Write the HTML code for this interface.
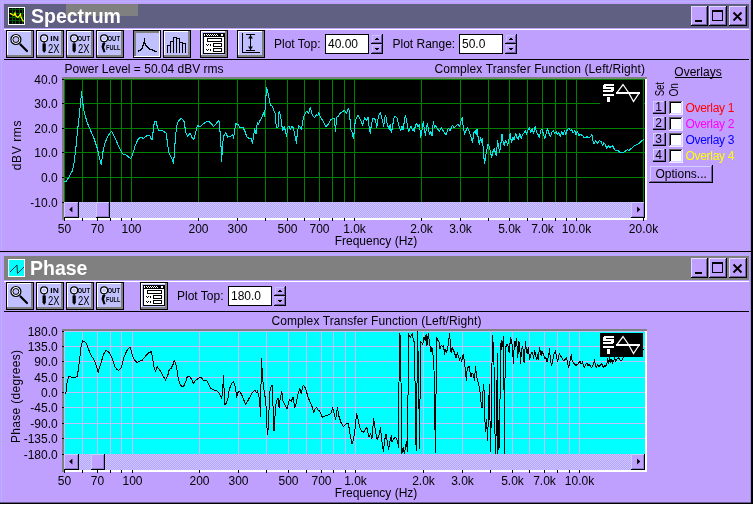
<!DOCTYPE html>
<html><head><meta charset="utf-8"><title>Spectrum / Phase</title>
<style>
html,body{margin:0;padding:0;background:#c0a0ff;overflow:hidden}
svg{display:block;font-family:"Liberation Sans",sans-serif;will-change:transform;transform:translateZ(0)}
</style></head><body>
<svg width="753" height="506" viewBox="0 0 753 506" shape-rendering="crispEdges">
<defs><pattern id="dith" width="2" height="2" patternUnits="userSpaceOnUse"><rect width="2" height="2" fill="#c0a0ff"/><rect width="1" height="1" fill="#c4ccff"/><rect x="1" y="1" width="1" height="1" fill="#c4ccff"/></pattern></defs>
<rect x="0" y="0" width="753" height="252" fill="#c0a0ff"/>
<rect x="1" y="1" width="749" height="1" fill="#b4b4ff"/>
<rect x="1" y="1" width="1" height="249" fill="#b4b4ff"/>
<rect x="750" y="1" width="1" height="250" fill="#a48ce4"/>
<rect x="0" y="251" width="753" height="1" fill="#000"/>
<rect x="751" y="0" width="2" height="252" fill="#000"/>
<rect x="4" y="4" width="745" height="24" fill="#606082"/>
<rect x="66" y="4" width="72" height="12" fill="#808080"/>
<rect x="4" y="29" width="745" height="1" fill="#fff"/>
<rect x="4" y="59" width="745" height="1" fill="#000"/>
<rect x="8" y="7" width="17" height="18" fill="#fff"/>
<rect x="9" y="8" width="15" height="16" fill="#000"/>
<rect x="12" y="8" width="1" height="16" fill="#005800"/>
<rect x="15" y="8" width="1" height="16" fill="#005800"/>
<rect x="19" y="8" width="1" height="16" fill="#005800"/>
<rect x="22" y="8" width="1" height="16" fill="#005800"/>
<rect x="9" y="9" width="15" height="1" fill="#005800"/>
<rect x="9" y="13" width="15" height="1" fill="#005800"/>
<rect x="9" y="17" width="15" height="1" fill="#005800"/>
<rect x="9" y="20" width="15" height="1" fill="#005800"/>
<path d="M10 13.4 L12 14.5 L14 15.5 L15 13 L16 16 L18 17.4 L19.5 15.5 L20.5 14 L21 17 L22 19 L23.5 21.5" stroke="#ffff00" stroke-width="1.2" fill="none" shape-rendering="auto"/>
<text x="31" y="22.8" font-size="19.5" text-anchor="start" fill="#fff" font-weight="bold">Spectrum</text>
<rect x="691" y="6" width="17" height="20" fill="#000"/>
<rect x="691" y="6" width="16" height="19" fill="#e0d8ff"/>
<rect x="692" y="7" width="15" height="18" fill="#7060a0"/>
<rect x="692" y="7" width="14" height="17" fill="#c0a0ff"/>
<rect x="709" y="6" width="18" height="20" fill="#000"/>
<rect x="709" y="6" width="17" height="19" fill="#e0d8ff"/>
<rect x="710" y="7" width="16" height="18" fill="#7060a0"/>
<rect x="710" y="7" width="15" height="17" fill="#c0a0ff"/>
<rect x="729" y="6" width="18" height="20" fill="#000"/>
<rect x="729" y="6" width="17" height="19" fill="#e0d8ff"/>
<rect x="730" y="7" width="16" height="18" fill="#7060a0"/>
<rect x="730" y="7" width="15" height="17" fill="#c0a0ff"/>
<rect x="695" y="20" width="7" height="2" fill="#000"/>
<rect x="712" y="10" width="11" height="11" fill="#000"/>
<rect x="713" y="12" width="9" height="8" fill="#c0a0ff"/>
<path d="M733.5 12.5 L741.5 20.5 M741.5 12.5 L733.5 20.5" stroke="#000" stroke-width="1.8" fill="none" shape-rendering="auto"/>
<rect x="6" y="30" width="28" height="28" fill="#000"/>
<rect x="7" y="31" width="26" height="26" fill="#808080"/>
<rect x="7" y="31" width="24" height="24" fill="#fff"/>
<rect x="8" y="32" width="23" height="23" fill="#c0c0ff"/>
<circle cx="15.9" cy="39.5" r="5" fill="#fff" stroke="#000" stroke-width="1.2" shape-rendering="auto"/>
<circle cx="15.9" cy="39.5" r="3" fill="#c0c0ff" stroke="#000" stroke-width="1" shape-rendering="auto"/>
<path d="M20.5 44.5 L27 51" stroke="#000" stroke-width="2.2" fill="none" shape-rendering="auto" stroke-linecap="round"/>
<rect x="36" y="30" width="28" height="28" fill="#000"/>
<rect x="37" y="31" width="26" height="26" fill="#808080"/>
<rect x="37" y="31" width="24" height="24" fill="#fff"/>
<rect x="38" y="32" width="23" height="23" fill="#c0c0ff"/>
<circle cx="44.1" cy="38.3" r="3.5" fill="#fff" stroke="#000" stroke-width="1.2" shape-rendering="auto"/>
<circle cx="44.1" cy="38.3" r="2.0" fill="#c0c0ff" shape-rendering="auto"/>
<rect x="43.6" y="41.5" width="1" height="2.5" fill="#000" shape-rendering="auto"/>
<path d="M42.5 43.5 L45.8 43.5 L45.8 50.5 L44.2 53 L42.5 50.5 Z" stroke="none" stroke-width="1" fill="#000" shape-rendering="auto"/>
<text x="50.3" y="41" font-size="7" text-anchor="start" fill="#000" font-weight="bold" textLength="8.5" lengthAdjust="spacingAndGlyphs">IN</text>
<text x="48" y="53" font-size="12" text-anchor="start" fill="#000" font-weight="normal" textLength="11.5" lengthAdjust="spacingAndGlyphs">2X</text>
<rect x="66" y="30" width="28" height="28" fill="#000"/>
<rect x="67" y="31" width="26" height="26" fill="#808080"/>
<rect x="67" y="31" width="24" height="24" fill="#fff"/>
<rect x="68" y="32" width="23" height="23" fill="#c0c0ff"/>
<circle cx="74.1" cy="38.3" r="3.5" fill="#fff" stroke="#000" stroke-width="1.2" shape-rendering="auto"/>
<circle cx="74.1" cy="38.3" r="2.0" fill="#c0c0ff" shape-rendering="auto"/>
<rect x="73.6" y="41.5" width="1" height="2.5" fill="#000" shape-rendering="auto"/>
<path d="M72.5 43.5 L75.8 43.5 L75.8 50.5 L74.2 53 L72.5 50.5 Z" stroke="none" stroke-width="1" fill="#000" shape-rendering="auto"/>
<text x="77.5" y="41" font-size="7" text-anchor="start" fill="#000" font-weight="bold" textLength="12.5" lengthAdjust="spacingAndGlyphs">OUT</text>
<text x="78" y="53" font-size="12" text-anchor="start" fill="#000" font-weight="normal" textLength="11.5" lengthAdjust="spacingAndGlyphs">2X</text>
<rect x="96" y="30" width="28" height="28" fill="#000"/>
<rect x="97" y="31" width="26" height="26" fill="#808080"/>
<rect x="97" y="31" width="24" height="24" fill="#fff"/>
<rect x="98" y="32" width="23" height="23" fill="#c0c0ff"/>
<circle cx="104.1" cy="38.3" r="3.5" fill="#fff" stroke="#000" stroke-width="1.2" shape-rendering="auto"/>
<circle cx="104.1" cy="38.3" r="2.0" fill="#c0c0ff" shape-rendering="auto"/>
<rect x="103.6" y="41.5" width="1" height="2.5" fill="#000" shape-rendering="auto"/>
<path d="M102.5 43 L105.5 43 L104 47 L105.5 52 L103.5 52.5 L101.5 47 Z" stroke="none" stroke-width="1" fill="#000" shape-rendering="auto"/>
<text x="107.5" y="41" font-size="7" text-anchor="start" fill="#000" font-weight="bold" textLength="12.5" lengthAdjust="spacingAndGlyphs">OUT</text>
<text x="106" y="49.5" font-size="6.5" text-anchor="start" fill="#000" font-weight="bold" textLength="14.3" lengthAdjust="spacingAndGlyphs">FULL</text>
<rect x="133" y="30" width="28" height="28" fill="#000"/>
<rect x="134" y="31" width="26" height="26" fill="#fff"/>
<rect x="134" y="31" width="25" height="25" fill="#808080"/>
<rect x="136" y="33" width="23" height="23" fill="#c0c0ff"/>
<path d="M138.5 52 V50.5 H140.5 V49.5 H141.5 V48 H142.5 V45 H143.5 V42 H144.5 V38 V43 H145.5 V45 H146.5 V46 H147.5 V47 H148.5 V48 H149.5 V49 H152.5 V50 H154.5 V51 H157" stroke="#000" stroke-width="1" fill="none"/>
<rect x="163" y="30" width="28" height="28" fill="#000"/>
<rect x="164" y="31" width="26" height="26" fill="#808080"/>
<rect x="164" y="31" width="24" height="24" fill="#fff"/>
<rect x="165" y="32" width="23" height="23" fill="#c0c0ff"/>
<path d="M167.5 53 V45.5 H170.5 V53" stroke="#000" stroke-width="1" fill="none"/>
<path d="M170.5 53 V41.5 H173.5 V53" stroke="#000" stroke-width="1" fill="none"/>
<path d="M173.5 53 V37.5 H176.5 V53" stroke="#000" stroke-width="1" fill="none"/>
<path d="M176.5 53 V38.5 H179.5 V53" stroke="#000" stroke-width="1" fill="none"/>
<path d="M179.5 53 V42.5 H182.5 V53" stroke="#000" stroke-width="1" fill="none"/>
<path d="M182.5 53 V43.5 H185.5 V53" stroke="#000" stroke-width="1" fill="none"/>
<rect x="200" y="30" width="28" height="28" fill="#000"/>
<rect x="201" y="31" width="26" height="26" fill="#808080"/>
<rect x="201" y="31" width="24" height="24" fill="#fff"/>
<rect x="202" y="32" width="23" height="23" fill="#c0c0ff"/>
<rect x="203" y="33" width="22" height="21" fill="#000"/>
<rect x="204" y="37" width="20" height="16" fill="#fff"/>
<rect x="206" y="34" width="1" height="1" fill="#fff"/>
<rect x="207" y="35" width="1" height="1" fill="#fff"/>
<rect x="208" y="34" width="1" height="1" fill="#fff"/>
<rect x="209" y="35" width="1" height="1" fill="#fff"/>
<rect x="210" y="34" width="1" height="1" fill="#fff"/>
<rect x="211" y="35" width="1" height="1" fill="#fff"/>
<rect x="212" y="34" width="1" height="1" fill="#fff"/>
<rect x="213" y="35" width="1" height="1" fill="#fff"/>
<rect x="214" y="34" width="1" height="1" fill="#fff"/>
<rect x="215" y="35" width="1" height="1" fill="#fff"/>
<rect x="216" y="34" width="1" height="1" fill="#fff"/>
<rect x="217" y="35" width="1" height="1" fill="#fff"/>
<rect x="204" y="34" width="1" height="2" fill="#fff"/>
<rect x="221" y="34" width="2" height="2" fill="#fff"/>
<rect x="207" y="38" width="15" height="4" fill="#000"/>
<rect x="208" y="39" width="13" height="2" fill="#fff"/>
<rect x="213" y="43" width="9" height="4" fill="#000"/>
<rect x="214" y="44" width="7" height="2" fill="#fff"/>
<rect x="213" y="48" width="9" height="4" fill="#000"/>
<rect x="214" y="49" width="7" height="2" fill="#fff"/>
<rect x="206" y="44" width="1" height="1" fill="#000"/>
<rect x="207" y="45" width="1" height="1" fill="#000"/>
<rect x="208" y="44" width="1" height="1" fill="#000"/>
<rect x="210" y="44" width="1" height="2" fill="#000"/>
<rect x="206" y="49" width="1" height="1" fill="#000"/>
<rect x="207" y="50" width="1" height="1" fill="#000"/>
<rect x="208" y="49" width="1" height="1" fill="#000"/>
<rect x="210" y="49" width="1" height="2" fill="#000"/>
<rect x="237" y="30" width="28" height="28" fill="#000"/>
<rect x="238" y="31" width="26" height="26" fill="#808080"/>
<rect x="238" y="31" width="24" height="24" fill="#fff"/>
<rect x="239" y="32" width="23" height="23" fill="#c0c0ff"/>
<rect x="242" y="33" width="1" height="20" fill="#000"/>
<rect x="242" y="52" width="18" height="1" fill="#000"/>
<rect x="246" y="34" width="9" height="1.3" fill="#000"/>
<rect x="246" y="50" width="9" height="1.3" fill="#000"/>
<rect x="250" y="35" width="1" height="15" fill="#000"/>
<path d="M250.5 35 L253 38.5 H248 Z" stroke="none" stroke-width="1" fill="#000" shape-rendering="auto"/>
<path d="M250.5 50 L253 46.5 H248 Z" stroke="none" stroke-width="1" fill="#000" shape-rendering="auto"/>
<text x="274" y="48" font-size="12" text-anchor="start" fill="#000" font-weight="normal">Plot Top:</text>
<rect x="325" y="34" width="44" height="20" fill="#000"/>
<rect x="326" y="35" width="42" height="18" fill="#fff"/>
<text x="328" y="48" font-size="12" text-anchor="start" fill="#000" font-weight="normal">40.00</text>
<rect x="371" y="34" width="12" height="20" fill="#c0a0ff"/>
<rect x="382" y="34" width="1" height="20" fill="#000"/>
<rect x="371" y="43" width="12" height="1" fill="#000"/>
<rect x="371" y="53" width="12" height="1" fill="#000"/>
<rect x="372" y="42" width="10" height="1" fill="#7060a0"/>
<rect x="381" y="35" width="1" height="8" fill="#7060a0"/>
<rect x="372" y="35" width="9" height="1" fill="#c4c4ff"/>
<rect x="372" y="35" width="1" height="7" fill="#c4c4ff"/>
<rect x="372" y="52" width="10" height="1" fill="#7060a0"/>
<rect x="381" y="45" width="1" height="8" fill="#7060a0"/>
<rect x="372" y="45" width="9" height="1" fill="#c4c4ff"/>
<rect x="372" y="45" width="1" height="7" fill="#c4c4ff"/>
<rect x="376" y="38" width="2" height="1" fill="#000"/>
<rect x="375" y="39" width="4" height="1" fill="#000"/>
<rect x="375" y="48" width="4" height="1" fill="#000"/>
<rect x="376" y="49" width="2" height="1" fill="#000"/>
<text x="392.5" y="48" font-size="12" text-anchor="start" fill="#000" font-weight="normal">Plot Range:</text>
<rect x="459" y="34" width="44" height="20" fill="#000"/>
<rect x="460" y="35" width="42" height="18" fill="#fff"/>
<text x="462" y="48" font-size="12" text-anchor="start" fill="#000" font-weight="normal">50.0</text>
<rect x="505" y="34" width="12" height="20" fill="#c0a0ff"/>
<rect x="516" y="34" width="1" height="20" fill="#000"/>
<rect x="505" y="43" width="12" height="1" fill="#000"/>
<rect x="505" y="53" width="12" height="1" fill="#000"/>
<rect x="506" y="42" width="10" height="1" fill="#7060a0"/>
<rect x="515" y="35" width="1" height="8" fill="#7060a0"/>
<rect x="506" y="35" width="9" height="1" fill="#c4c4ff"/>
<rect x="506" y="35" width="1" height="7" fill="#c4c4ff"/>
<rect x="506" y="52" width="10" height="1" fill="#7060a0"/>
<rect x="515" y="45" width="1" height="8" fill="#7060a0"/>
<rect x="506" y="45" width="9" height="1" fill="#c4c4ff"/>
<rect x="506" y="45" width="1" height="7" fill="#c4c4ff"/>
<rect x="510" y="38" width="2" height="1" fill="#000"/>
<rect x="509" y="39" width="4" height="1" fill="#000"/>
<rect x="509" y="48" width="4" height="1" fill="#000"/>
<rect x="510" y="49" width="2" height="1" fill="#000"/>
<rect x="62" y="77" width="585" height="143" fill="#808080"/>
<rect x="64" y="79" width="583" height="141" fill="#fff"/>
<rect x="64" y="79" width="581" height="123" fill="#000"/>
<rect x="64" y="79" width="581" height="1" fill="#008000"/>
<rect x="62" y="79" width="2" height="1" fill="#000"/>
<rect x="64" y="103" width="581" height="1" fill="#008000"/>
<rect x="62" y="103" width="2" height="1" fill="#000"/>
<rect x="64" y="128" width="581" height="1" fill="#008000"/>
<rect x="62" y="128" width="2" height="1" fill="#000"/>
<rect x="64" y="152" width="581" height="1" fill="#008000"/>
<rect x="62" y="152" width="2" height="1" fill="#000"/>
<rect x="64" y="177" width="581" height="1" fill="#008000"/>
<rect x="62" y="177" width="2" height="1" fill="#000"/>
<rect x="62" y="202" width="2" height="1" fill="#000"/>
<rect x="64" y="79" width="1" height="123" fill="#008000"/>
<rect x="82" y="79" width="1" height="123" fill="#008000"/>
<rect x="97" y="79" width="1" height="123" fill="#008000"/>
<rect x="110" y="79" width="1" height="123" fill="#008000"/>
<rect x="121" y="79" width="1" height="123" fill="#008000"/>
<rect x="131" y="79" width="1" height="123" fill="#008000"/>
<rect x="198" y="79" width="1" height="123" fill="#008000"/>
<rect x="237" y="79" width="1" height="123" fill="#008000"/>
<rect x="265" y="79" width="1" height="123" fill="#008000"/>
<rect x="287" y="79" width="1" height="123" fill="#008000"/>
<rect x="304" y="79" width="1" height="123" fill="#008000"/>
<rect x="319" y="79" width="1" height="123" fill="#008000"/>
<rect x="332" y="79" width="1" height="123" fill="#008000"/>
<rect x="344" y="79" width="1" height="123" fill="#008000"/>
<rect x="354" y="79" width="1" height="123" fill="#008000"/>
<rect x="421" y="79" width="1" height="123" fill="#008000"/>
<rect x="460" y="79" width="1" height="123" fill="#008000"/>
<rect x="488" y="79" width="1" height="123" fill="#008000"/>
<rect x="509" y="79" width="1" height="123" fill="#008000"/>
<rect x="527" y="79" width="1" height="123" fill="#008000"/>
<rect x="542" y="79" width="1" height="123" fill="#008000"/>
<rect x="555" y="79" width="1" height="123" fill="#008000"/>
<rect x="566" y="79" width="1" height="123" fill="#008000"/>
<rect x="576" y="79" width="1" height="123" fill="#008000"/>
<rect x="643" y="79" width="1" height="123" fill="#008000"/>
<path d="M63.9 181.1 L66.5 181.1 L69.8 175.7 L72.6 170.2 L74.1 162.6 L75.7 149.6 L77.4 132.2 L79.1 117.0 L80.7 101.7 L81.5 92.0 L82.6 101.7 L84.3 112.6 L87.2 122.4 L90.4 130.0 L94.1 138.7 L97.0 147.4 L99.1 156.1 L101.3 164.8 L103.0 151.7 L105.0 143.0 L107.8 136.1 L111.5 131.3 L115.4 138.7 L119.1 147.4 L122.4 153.9 L126.3 155.0 L130.7 158.7 L132.8 153.9 L135.0 146.3 L137.6 140.2 L140.0 137.4 L143.7 138.3 L147.0 135.4 L150.2 136.1 L150.0 137.2 L152.1 139.8 L153.2 130.9 L154.4 121.7 L156.4 121.7 L157.5 128.3 L158.9 130.6 L162.5 130.9 L166.0 132.7 L167.3 141.6 L168.7 152.3 L171.0 156.7 L172.6 160.3 L173.5 163.8 L174.4 152.3 L175.4 138.0 L176.7 125.6 L178.5 121.1 L181.5 118.1 L184.2 121.7 L185.6 131.8 L187.4 136.3 L190.2 133.2 L191.8 137.2 L193.8 139.3 L195.4 133.6 L197.3 125.6 L200.2 126.5 L203.4 123.8 L207.3 121.1 L209.6 122.0 L213.7 126.5 L218.9 120.6 L219.8 128.3 L220.8 141.6 L221.7 161.2 L222.6 143.4 L223.8 135.9 L225.6 132.7 L227.8 137.2 L231.0 135.9 L232.7 134.5 L233.6 138.0 L234.9 128.3 L235.9 123.8 L238.1 124.7 L239.9 127.7 L243.2 127.7 L245.0 131.6 L246.8 136.9 L248.9 138.4 L251.2 138.7 L252.5 143.2 L253.5 136.9 L254.6 128.9 L256.0 134.3 L257.3 122.7 L258.3 124.5 L259.9 120.6 L261.7 118.3 L263.5 112.9 L264.4 116.5 L265.3 106.7 L266.2 92.5 L266.7 87.5 L267.9 92.5 L269.4 99.6 L270.6 105.8 L272.0 105.8 L273.8 110.2 L275.2 113.8 L276.3 127.2 L278.1 127.2 L279.1 111.1 L280.6 115.6 L282.0 126.3 L282.7 130.2 L284.1 126.6 L285.4 130.7 L286.6 136.0 L287.7 127.7 L288.9 125.9 L290.4 129.8 L292.0 125.9 L293.4 128.0 L294.8 135.2 L296.4 143.2 L297.5 131.6 L298.7 125.4 L300.1 127.2 L301.4 129.8 L302.6 121.8 L304.1 115.6 L305.8 112.0 L307.6 111.7 L308.5 113.8 L310.3 107.6 L311.5 112.0 L312.6 115.6 L314.7 117.4 L316.5 114.7 L317.8 115.6 L318.8 112.6 L320.4 117.4 L323.3 121.3 L325.9 126.6 L328.1 124.5 L330.7 120.0 L332.4 118.5 L334.4 119.0 L335.5 131.7 L336.6 117.4 L338.2 116.3 L340.3 113.2 L342.7 111.6 L344.6 110.3 L346.6 113.2 L348.5 108.4 L349.3 111.1 L350.1 120.6 L351.0 130.1 L352.2 132.5 L353.4 138.5 L354.5 129.3 L355.3 120.6 L357.7 115.1 L360.1 119.0 L361.6 122.2 L362.4 125.3 L363.5 122.2 L364.8 117.4 L366.7 120.6 L368.0 117.4 L369.2 127.7 L370.3 133.3 L371.5 123.8 L373.0 117.9 L374.8 119.0 L375.9 122.2 L376.8 127.4 L377.9 119.8 L379.4 113.5 L380.3 112.7 L381.4 116.6 L382.7 122.2 L383.8 126.1 L384.7 118.2 L385.7 115.1 L386.6 121.4 L388.1 126.9 L389.3 129.3 L390.1 124.2 L391.2 132.2 L392.5 127.7 L393.6 119.0 L395.2 116.3 L396.8 117.4 L398.4 123.8 L399.6 128.5 L400.7 130.6 L402.0 126.5 L403.1 130.1 L404.1 123.0 L405.3 115.4 L406.4 119.0 L407.5 126.1 L408.6 131.7 L409.9 128.5 L411.0 126.5 L412.3 130.1 L413.4 128.5 L414.3 131.7 L415.4 125.3 L416.7 123.8 L418.0 126.5 L419.1 124.6 L420.2 130.9 L420.8 137.7 L421.9 130.6 L423.2 121.9 L424.4 129.0 L425.5 135.3 L426.6 126.6 L427.4 123.5 L428.7 130.6 L429.8 134.6 L430.8 131.4 L432.0 136.1 L433.3 121.9 L434.6 127.4 L435.8 125.9 L437.7 129.0 L439.3 131.4 L441.4 127.9 L443.7 131.4 L446.1 134.9 L448.2 128.2 L450.1 130.6 L452.4 125.1 L454.0 127.9 L456.1 125.9 L458.0 124.3 L459.6 126.6 L460.8 121.9 L462.2 117.5 L463.2 126.6 L464.6 134.6 L465.9 130.6 L467.5 127.4 L469.1 131.4 L470.9 136.5 L472.5 142.5 L473.8 133.0 L475.1 130.6 L476.2 134.6 L477.0 129.5 L478.2 137.7 L479.3 144.1 L480.6 137.4 L481.4 142.5 L482.2 138.5 L483.3 148.8 L484.1 159.9 L484.6 163.8 L485.7 155.1 L486.8 150.4 L488.0 144.1 L489.3 146.4 L490.4 152.0 L491.7 157.5 L492.8 152.0 L494.1 148.8 L495.2 152.0 L496.3 155.9 L497.5 140.9 L498.6 146.4 L499.6 152.8 L500.7 144.8 L502.0 134.6 L503.1 141.7 L504.2 145.6 L505.4 140.9 L506.7 141.7 L507.8 145.3 L508.9 139.3 L510.2 133.8 L511.5 142.8 L512.8 137.2 L514.1 140.0 L515.6 133.1 L516.9 137.2 L518.4 139.0 L519.7 133.5 L521.2 138.1 L522.6 134.4 L523.9 133.1 L525.4 130.7 L526.7 134.4 L528.2 129.4 L529.5 127.9 L530.8 132.5 L532.3 128.8 L533.6 133.5 L535.1 126.6 L536.4 131.6 L537.9 134.4 L539.2 137.2 L540.7 130.7 L542.0 128.8 L543.5 134.4 L544.8 139.0 L546.3 132.5 L547.7 128.8 L549.0 133.5 L550.5 136.3 L551.8 132.5 L553.3 130.7 L554.6 133.5 L556.1 131.6 L557.4 134.4 L558.7 132.5 L560.2 136.3 L561.7 131.6 L563.0 135.3 L564.5 130.7 L565.8 134.4 L567.3 129.4 L569.1 128.3 L570.4 130.7 L571.9 129.7 L573.2 133.1 L574.7 130.7 L576.0 134.4 L577.3 131.6 L578.8 135.3 L580.6 134.4 L582.5 135.7 L584.4 137.7 L587.2 136.8 L589.0 138.1 L590.9 136.3 L591.8 134.0 L592.7 140.0 L594.0 143.7 L595.5 140.9 L597.4 143.7 L599.2 140.5 L601.1 141.8 L602.6 145.5 L603.9 142.8 L605.4 144.6 L606.7 148.3 L608.2 145.5 L609.8 147.4 L611.3 146.5 L612.6 145.5 L614.1 148.7 L616.0 151.1 L617.8 150.6 L619.7 152.1 L623.8 152.1 L625.3 151.1 L627.5 149.8 L629.0 150.6 L631.8 148.0 L634.6 145.5 L637.3 144.6 L640.1 142.4 L642.9 140.0 L644.2 139.2" stroke="#00e8e8" stroke-width="1.05" fill="none" shape-rendering="crispEdges" stroke-linejoin="round"/>
<rect x="600" y="81" width="43" height="24" fill="#000"/>
<rect x="604" y="84" width="10" height="2" fill="#fff"/>
<rect x="603" y="85" width="3" height="3" fill="#fff"/>
<rect x="603" y="87" width="11" height="2" fill="#fff"/>
<rect x="611" y="88" width="3" height="3" fill="#fff"/>
<rect x="603" y="90" width="10" height="2" fill="#fff"/>
<rect x="603" y="94" width="11" height="2" fill="#fff"/>
<rect x="607" y="97" width="3" height="5" fill="#fff"/>
<rect x="616" y="92" width="24" height="2" fill="#fff"/>
<path d="M617 92.5 L623 84.5 L628.5 92.5 L633.5 101.5 L639.5 92.5" stroke="#fff" stroke-width="1.25" fill="none" shape-rendering="auto" stroke-linejoin="miter"/>
<rect x="64" y="202" width="581" height="16" fill="url(#dith)"/>
<rect x="64" y="202" width="15" height="16" fill="#000"/>
<rect x="64" y="202" width="14" height="15" fill="#c8ccff"/>
<rect x="65" y="203" width="13" height="14" fill="#9080d0"/>
<rect x="65" y="203" width="12" height="13" fill="#c0a0ff"/>
<path d="M69.2 209.6 L72.4 206.6 V212.6 Z" stroke="none" stroke-width="1" fill="#000" shape-rendering="auto"/>
<rect x="631" y="202" width="14" height="16" fill="#000"/>
<rect x="631" y="202" width="13" height="15" fill="#c8ccff"/>
<rect x="632" y="203" width="12" height="14" fill="#9080d0"/>
<rect x="632" y="203" width="11" height="13" fill="#c0a0ff"/>
<path d="M640.3 209.6 L637.1 206.6 V212.6 Z" stroke="none" stroke-width="1" fill="#000" shape-rendering="auto"/>
<rect x="96" y="202" width="14" height="16" fill="#000"/>
<rect x="96" y="202" width="13" height="15" fill="#c8ccff"/>
<rect x="97" y="203" width="12" height="14" fill="#9080d0"/>
<rect x="97" y="203" width="11" height="13" fill="#c0a0ff"/>
<rect x="64" y="218" width="1" height="3" fill="#000"/>
<text x="64.5" y="233" font-size="12" text-anchor="middle" fill="#000" font-weight="normal">50</text>
<rect x="82" y="218" width="1" height="3" fill="#000"/>
<rect x="97" y="218" width="1" height="3" fill="#000"/>
<text x="97.5" y="233" font-size="12" text-anchor="middle" fill="#000" font-weight="normal">70</text>
<rect x="110" y="218" width="1" height="3" fill="#000"/>
<rect x="121" y="218" width="1" height="3" fill="#000"/>
<rect x="131" y="218" width="1" height="3" fill="#000"/>
<text x="131.5" y="233" font-size="12" text-anchor="middle" fill="#000" font-weight="normal">100</text>
<rect x="198" y="218" width="1" height="3" fill="#000"/>
<text x="198.5" y="233" font-size="12" text-anchor="middle" fill="#000" font-weight="normal">200</text>
<rect x="237" y="218" width="1" height="3" fill="#000"/>
<text x="237.5" y="233" font-size="12" text-anchor="middle" fill="#000" font-weight="normal">300</text>
<rect x="265" y="218" width="1" height="3" fill="#000"/>
<rect x="287" y="218" width="1" height="3" fill="#000"/>
<text x="287.5" y="233" font-size="12" text-anchor="middle" fill="#000" font-weight="normal">500</text>
<rect x="304" y="218" width="1" height="3" fill="#000"/>
<rect x="319" y="218" width="1" height="3" fill="#000"/>
<text x="319.5" y="233" font-size="12" text-anchor="middle" fill="#000" font-weight="normal">700</text>
<rect x="332" y="218" width="1" height="3" fill="#000"/>
<rect x="344" y="218" width="1" height="3" fill="#000"/>
<rect x="354" y="218" width="1" height="3" fill="#000"/>
<text x="354.5" y="233" font-size="12" text-anchor="middle" fill="#000" font-weight="normal">1.0k</text>
<rect x="421" y="218" width="1" height="3" fill="#000"/>
<text x="421.5" y="233" font-size="12" text-anchor="middle" fill="#000" font-weight="normal">2.0k</text>
<rect x="460" y="218" width="1" height="3" fill="#000"/>
<text x="460.5" y="233" font-size="12" text-anchor="middle" fill="#000" font-weight="normal">3.0k</text>
<rect x="488" y="218" width="1" height="3" fill="#000"/>
<rect x="509" y="218" width="1" height="3" fill="#000"/>
<text x="509.5" y="233" font-size="12" text-anchor="middle" fill="#000" font-weight="normal">5.0k</text>
<rect x="527" y="218" width="1" height="3" fill="#000"/>
<rect x="542" y="218" width="1" height="3" fill="#000"/>
<text x="542.5" y="233" font-size="12" text-anchor="middle" fill="#000" font-weight="normal">7.0k</text>
<rect x="555" y="218" width="1" height="3" fill="#000"/>
<rect x="566" y="218" width="1" height="3" fill="#000"/>
<rect x="576" y="218" width="1" height="3" fill="#000"/>
<text x="576.5" y="233" font-size="12" text-anchor="middle" fill="#000" font-weight="normal">10.0k</text>
<rect x="643" y="218" width="1" height="3" fill="#000"/>
<text x="643.5" y="233" font-size="12" text-anchor="middle" fill="#000" font-weight="normal">20.0k</text>
<text x="376" y="245" font-size="12" text-anchor="middle" fill="#000" font-weight="normal">Frequency (Hz)</text>
<text x="57.7" y="84.0" font-size="12" text-anchor="end" fill="#000" font-weight="normal">40.0</text>
<text x="57.7" y="108.0" font-size="12" text-anchor="end" fill="#000" font-weight="normal">30.0</text>
<text x="57.7" y="133.0" font-size="12" text-anchor="end" fill="#000" font-weight="normal">20.0</text>
<text x="57.7" y="157.0" font-size="12" text-anchor="end" fill="#000" font-weight="normal">10.0</text>
<text x="57.7" y="182.0" font-size="12" text-anchor="end" fill="#000" font-weight="normal">0.0</text>
<text x="57.7" y="207.0" font-size="12" text-anchor="end" fill="#000" font-weight="normal">-10.0</text>
<text x="64.5" y="73" font-size="12" text-anchor="start" fill="#000" font-weight="normal">Power Level = 50.04 dBV rms</text>
<text x="434.4" y="73" font-size="12" text-anchor="start" fill="#000" font-weight="normal" textLength="210.6" lengthAdjust="spacing">Complex Transfer Function (Left/Right)</text>
<text transform="translate(20.5,170.3) rotate(-90)" font-size="12" textLength="49.8" lengthAdjust="spacing">dBV rms</text>
<text x="698" y="76" font-size="12" text-anchor="middle" fill="#000" font-weight="normal">Overlays</text>
<rect x="675" y="77" width="47" height="1" fill="#000"/>
<text transform="translate(663.5,96.3) rotate(-90)" font-size="12" textLength="14.3" lengthAdjust="spacingAndGlyphs">Set</text>
<text transform="translate(678,96.5) rotate(-90)" font-size="12" textLength="13.5" lengthAdjust="spacingAndGlyphs">On</text>
<rect x="653" y="101" width="13" height="13" fill="#000"/>
<rect x="653" y="101" width="12" height="12" fill="#7060a0"/>
<rect x="653" y="101" width="11" height="11" fill="#d0d0ff"/>
<rect x="654" y="102" width="10" height="10" fill="#c0a0ff"/>
<text x="658.7" y="111.2" font-size="12" text-anchor="middle" fill="#000" font-weight="normal">1</text>
<rect x="669" y="101" width="14" height="14" fill="#f0ecff"/>
<rect x="669" y="101" width="13" height="13" fill="#606060"/>
<rect x="670" y="102" width="12" height="12" fill="#d8d0ff"/>
<rect x="670" y="102" width="11" height="11" fill="#000"/>
<rect x="671" y="103" width="10" height="10" fill="#fff"/>
<text x="685.5" y="112" font-size="12" text-anchor="start" fill="#ff0000" font-weight="normal" textLength="49" lengthAdjust="spacing">Overlay 1</text>
<rect x="653" y="117" width="13" height="13" fill="#000"/>
<rect x="653" y="117" width="12" height="12" fill="#7060a0"/>
<rect x="653" y="117" width="11" height="11" fill="#d0d0ff"/>
<rect x="654" y="118" width="10" height="10" fill="#c0a0ff"/>
<text x="658.7" y="127.2" font-size="12" text-anchor="middle" fill="#000" font-weight="normal">2</text>
<rect x="669" y="117" width="14" height="14" fill="#f0ecff"/>
<rect x="669" y="117" width="13" height="13" fill="#606060"/>
<rect x="670" y="118" width="12" height="12" fill="#d8d0ff"/>
<rect x="670" y="118" width="11" height="11" fill="#000"/>
<rect x="671" y="119" width="10" height="10" fill="#fff"/>
<text x="685.5" y="128" font-size="12" text-anchor="start" fill="#ff00ff" font-weight="normal" textLength="49" lengthAdjust="spacing">Overlay 2</text>
<rect x="653" y="133" width="13" height="13" fill="#000"/>
<rect x="653" y="133" width="12" height="12" fill="#7060a0"/>
<rect x="653" y="133" width="11" height="11" fill="#d0d0ff"/>
<rect x="654" y="134" width="10" height="10" fill="#c0a0ff"/>
<text x="658.7" y="143.2" font-size="12" text-anchor="middle" fill="#000" font-weight="normal">3</text>
<rect x="669" y="133" width="14" height="14" fill="#f0ecff"/>
<rect x="669" y="133" width="13" height="13" fill="#606060"/>
<rect x="670" y="134" width="12" height="12" fill="#d8d0ff"/>
<rect x="670" y="134" width="11" height="11" fill="#000"/>
<rect x="671" y="135" width="10" height="10" fill="#fff"/>
<text x="685.5" y="144" font-size="12" text-anchor="start" fill="#0000ff" font-weight="normal" textLength="49" lengthAdjust="spacing">Overlay 3</text>
<rect x="653" y="149" width="13" height="13" fill="#000"/>
<rect x="653" y="149" width="12" height="12" fill="#7060a0"/>
<rect x="653" y="149" width="11" height="11" fill="#d0d0ff"/>
<rect x="654" y="150" width="10" height="10" fill="#c0a0ff"/>
<text x="658.7" y="159.2" font-size="12" text-anchor="middle" fill="#000" font-weight="normal">4</text>
<rect x="669" y="149" width="14" height="14" fill="#f0ecff"/>
<rect x="669" y="149" width="13" height="13" fill="#606060"/>
<rect x="670" y="150" width="12" height="12" fill="#d8d0ff"/>
<rect x="670" y="150" width="11" height="11" fill="#000"/>
<rect x="671" y="151" width="10" height="10" fill="#fff"/>
<text x="685.5" y="160" font-size="12" text-anchor="start" fill="#ffff00" font-weight="normal" textLength="49" lengthAdjust="spacing">Overlay 4</text>
<rect x="649" y="165" width="64" height="18" fill="#000"/>
<rect x="649" y="165" width="63" height="17" fill="#c0a0ff"/>
<rect x="650" y="166" width="62" height="16" fill="#7060a0"/>
<rect x="650" y="166" width="61" height="15" fill="#d0d0ff"/>
<rect x="651" y="167" width="60" height="14" fill="#c0a0ff"/>
<text x="655.5" y="178" font-size="12" text-anchor="start" fill="#000" font-weight="normal">Options...</text>
<rect x="0" y="252" width="753" height="252" fill="#c0a0ff"/>
<rect x="1" y="254" width="749" height="1" fill="#b4b4ff"/>
<rect x="1" y="254" width="1" height="248" fill="#b4b4ff"/>
<rect x="750" y="253" width="1" height="250" fill="#a48ce4"/>
<rect x="0" y="503" width="753" height="1" fill="#000"/>
<rect x="751" y="252" width="2" height="252" fill="#000"/>
<rect x="0" y="502" width="751" height="1" fill="#6a5890"/>
<rect x="4" y="256" width="745" height="24" fill="#808080"/>
<rect x="4" y="281" width="745" height="1" fill="#fff"/>
<rect x="4" y="311" width="745" height="1" fill="#000"/>
<rect x="8" y="259" width="17" height="18" fill="#fff"/>
<rect x="9" y="260" width="15" height="16" fill="#00ffff"/>
<path d="M10 272 L17 265 L17.5 273.5 L24 267" stroke="#003030" stroke-width="1" fill="none" shape-rendering="auto"/>
<text x="30" y="274.8" font-size="19.5" text-anchor="start" fill="#fff" font-weight="bold">Phase</text>
<rect x="691" y="258" width="17" height="20" fill="#000"/>
<rect x="691" y="258" width="16" height="19" fill="#e0d8ff"/>
<rect x="692" y="259" width="15" height="18" fill="#7060a0"/>
<rect x="692" y="259" width="14" height="17" fill="#c0a0ff"/>
<rect x="709" y="258" width="18" height="20" fill="#000"/>
<rect x="709" y="258" width="17" height="19" fill="#e0d8ff"/>
<rect x="710" y="259" width="16" height="18" fill="#7060a0"/>
<rect x="710" y="259" width="15" height="17" fill="#c0a0ff"/>
<rect x="729" y="258" width="18" height="20" fill="#000"/>
<rect x="729" y="258" width="17" height="19" fill="#e0d8ff"/>
<rect x="730" y="259" width="16" height="18" fill="#7060a0"/>
<rect x="730" y="259" width="15" height="17" fill="#c0a0ff"/>
<rect x="695" y="272" width="7" height="2" fill="#000"/>
<rect x="712" y="262" width="11" height="11" fill="#000"/>
<rect x="713" y="264" width="9" height="8" fill="#c0a0ff"/>
<path d="M733.5 264.5 L741.5 272.5 M741.5 264.5 L733.5 272.5" stroke="#000" stroke-width="1.8" fill="none" shape-rendering="auto"/>
<rect x="6" y="282" width="28" height="28" fill="#000"/>
<rect x="7" y="283" width="26" height="26" fill="#808080"/>
<rect x="7" y="283" width="24" height="24" fill="#fff"/>
<rect x="8" y="284" width="23" height="23" fill="#c0c0ff"/>
<circle cx="15.9" cy="291.5" r="5" fill="#fff" stroke="#000" stroke-width="1.2" shape-rendering="auto"/>
<circle cx="15.9" cy="291.5" r="3" fill="#c0c0ff" stroke="#000" stroke-width="1" shape-rendering="auto"/>
<path d="M20.5 296.5 L27 303" stroke="#000" stroke-width="2.2" fill="none" shape-rendering="auto" stroke-linecap="round"/>
<rect x="36" y="282" width="28" height="28" fill="#000"/>
<rect x="37" y="283" width="26" height="26" fill="#808080"/>
<rect x="37" y="283" width="24" height="24" fill="#fff"/>
<rect x="38" y="284" width="23" height="23" fill="#c0c0ff"/>
<circle cx="44.1" cy="290.3" r="3.5" fill="#fff" stroke="#000" stroke-width="1.2" shape-rendering="auto"/>
<circle cx="44.1" cy="290.3" r="2.0" fill="#c0c0ff" shape-rendering="auto"/>
<rect x="43.6" y="293.5" width="1" height="2.5" fill="#000" shape-rendering="auto"/>
<path d="M42.5 295.5 L45.8 295.5 L45.8 302.5 L44.2 305 L42.5 302.5 Z" stroke="none" stroke-width="1" fill="#000" shape-rendering="auto"/>
<text x="50.3" y="293" font-size="7" text-anchor="start" fill="#000" font-weight="bold" textLength="8.5" lengthAdjust="spacingAndGlyphs">IN</text>
<text x="48" y="305" font-size="12" text-anchor="start" fill="#000" font-weight="normal" textLength="11.5" lengthAdjust="spacingAndGlyphs">2X</text>
<rect x="66" y="282" width="28" height="28" fill="#000"/>
<rect x="67" y="283" width="26" height="26" fill="#808080"/>
<rect x="67" y="283" width="24" height="24" fill="#fff"/>
<rect x="68" y="284" width="23" height="23" fill="#c0c0ff"/>
<circle cx="74.1" cy="290.3" r="3.5" fill="#fff" stroke="#000" stroke-width="1.2" shape-rendering="auto"/>
<circle cx="74.1" cy="290.3" r="2.0" fill="#c0c0ff" shape-rendering="auto"/>
<rect x="73.6" y="293.5" width="1" height="2.5" fill="#000" shape-rendering="auto"/>
<path d="M72.5 295.5 L75.8 295.5 L75.8 302.5 L74.2 305 L72.5 302.5 Z" stroke="none" stroke-width="1" fill="#000" shape-rendering="auto"/>
<text x="77.5" y="293" font-size="7" text-anchor="start" fill="#000" font-weight="bold" textLength="12.5" lengthAdjust="spacingAndGlyphs">OUT</text>
<text x="78" y="305" font-size="12" text-anchor="start" fill="#000" font-weight="normal" textLength="11.5" lengthAdjust="spacingAndGlyphs">2X</text>
<rect x="96" y="282" width="28" height="28" fill="#000"/>
<rect x="97" y="283" width="26" height="26" fill="#808080"/>
<rect x="97" y="283" width="24" height="24" fill="#fff"/>
<rect x="98" y="284" width="23" height="23" fill="#c0c0ff"/>
<circle cx="104.1" cy="290.3" r="3.5" fill="#fff" stroke="#000" stroke-width="1.2" shape-rendering="auto"/>
<circle cx="104.1" cy="290.3" r="2.0" fill="#c0c0ff" shape-rendering="auto"/>
<rect x="103.6" y="293.5" width="1" height="2.5" fill="#000" shape-rendering="auto"/>
<path d="M102.5 295 L105.5 295 L104 299 L105.5 304 L103.5 304.5 L101.5 299 Z" stroke="none" stroke-width="1" fill="#000" shape-rendering="auto"/>
<text x="107.5" y="293" font-size="7" text-anchor="start" fill="#000" font-weight="bold" textLength="12.5" lengthAdjust="spacingAndGlyphs">OUT</text>
<text x="106" y="301.5" font-size="6.5" text-anchor="start" fill="#000" font-weight="bold" textLength="14.3" lengthAdjust="spacingAndGlyphs">FULL</text>
<rect x="140" y="282" width="28" height="28" fill="#000"/>
<rect x="141" y="283" width="26" height="26" fill="#808080"/>
<rect x="141" y="283" width="24" height="24" fill="#fff"/>
<rect x="142" y="284" width="23" height="23" fill="#c0c0ff"/>
<rect x="143" y="285" width="22" height="21" fill="#000"/>
<rect x="144" y="289" width="20" height="16" fill="#fff"/>
<rect x="146" y="286" width="1" height="1" fill="#fff"/>
<rect x="147" y="287" width="1" height="1" fill="#fff"/>
<rect x="148" y="286" width="1" height="1" fill="#fff"/>
<rect x="149" y="287" width="1" height="1" fill="#fff"/>
<rect x="150" y="286" width="1" height="1" fill="#fff"/>
<rect x="151" y="287" width="1" height="1" fill="#fff"/>
<rect x="152" y="286" width="1" height="1" fill="#fff"/>
<rect x="153" y="287" width="1" height="1" fill="#fff"/>
<rect x="154" y="286" width="1" height="1" fill="#fff"/>
<rect x="155" y="287" width="1" height="1" fill="#fff"/>
<rect x="156" y="286" width="1" height="1" fill="#fff"/>
<rect x="157" y="287" width="1" height="1" fill="#fff"/>
<rect x="144" y="286" width="1" height="2" fill="#fff"/>
<rect x="161" y="286" width="2" height="2" fill="#fff"/>
<rect x="147" y="290" width="15" height="4" fill="#000"/>
<rect x="148" y="291" width="13" height="2" fill="#fff"/>
<rect x="153" y="295" width="9" height="4" fill="#000"/>
<rect x="154" y="296" width="7" height="2" fill="#fff"/>
<rect x="153" y="300" width="9" height="4" fill="#000"/>
<rect x="154" y="301" width="7" height="2" fill="#fff"/>
<rect x="146" y="296" width="1" height="1" fill="#000"/>
<rect x="147" y="297" width="1" height="1" fill="#000"/>
<rect x="148" y="296" width="1" height="1" fill="#000"/>
<rect x="150" y="296" width="1" height="2" fill="#000"/>
<rect x="146" y="301" width="1" height="1" fill="#000"/>
<rect x="147" y="302" width="1" height="1" fill="#000"/>
<rect x="148" y="301" width="1" height="1" fill="#000"/>
<rect x="150" y="301" width="1" height="2" fill="#000"/>
<text x="177" y="300" font-size="12" text-anchor="start" fill="#000" font-weight="normal">Plot Top:</text>
<rect x="228" y="286" width="44" height="20" fill="#000"/>
<rect x="229" y="287" width="42" height="18" fill="#fff"/>
<text x="231" y="300" font-size="12" text-anchor="start" fill="#000" font-weight="normal">180.0</text>
<rect x="274" y="286" width="12" height="20" fill="#c0a0ff"/>
<rect x="285" y="286" width="1" height="20" fill="#000"/>
<rect x="274" y="295" width="12" height="1" fill="#000"/>
<rect x="274" y="305" width="12" height="1" fill="#000"/>
<rect x="275" y="294" width="10" height="1" fill="#7060a0"/>
<rect x="284" y="287" width="1" height="8" fill="#7060a0"/>
<rect x="275" y="287" width="9" height="1" fill="#c4c4ff"/>
<rect x="275" y="287" width="1" height="7" fill="#c4c4ff"/>
<rect x="275" y="304" width="10" height="1" fill="#7060a0"/>
<rect x="284" y="297" width="1" height="8" fill="#7060a0"/>
<rect x="275" y="297" width="9" height="1" fill="#c4c4ff"/>
<rect x="275" y="297" width="1" height="7" fill="#c4c4ff"/>
<rect x="279" y="290" width="2" height="1" fill="#000"/>
<rect x="278" y="291" width="4" height="1" fill="#000"/>
<rect x="278" y="300" width="4" height="1" fill="#000"/>
<rect x="279" y="301" width="2" height="1" fill="#000"/>
<rect x="62" y="329" width="585" height="143" fill="#808080"/>
<rect x="64" y="331" width="583" height="141" fill="#fff"/>
<rect x="64" y="331" width="581" height="123" fill="#00ffff"/>
<rect x="64" y="331" width="581" height="1" fill="#c0c0ff"/>
<rect x="62" y="331" width="2" height="1" fill="#000"/>
<rect x="64" y="346" width="581" height="1" fill="#c0c0ff"/>
<rect x="62" y="346" width="2" height="1" fill="#000"/>
<rect x="64" y="361" width="581" height="1" fill="#c0c0ff"/>
<rect x="62" y="361" width="2" height="1" fill="#000"/>
<rect x="64" y="377" width="581" height="1" fill="#c0c0ff"/>
<rect x="62" y="377" width="2" height="1" fill="#000"/>
<rect x="64" y="392" width="581" height="1" fill="#c0c0ff"/>
<rect x="62" y="392" width="2" height="1" fill="#000"/>
<rect x="64" y="407" width="581" height="1" fill="#c0c0ff"/>
<rect x="62" y="407" width="2" height="1" fill="#000"/>
<rect x="64" y="423" width="581" height="1" fill="#c0c0ff"/>
<rect x="62" y="423" width="2" height="1" fill="#000"/>
<rect x="64" y="438" width="581" height="1" fill="#c0c0ff"/>
<rect x="62" y="438" width="2" height="1" fill="#000"/>
<rect x="62" y="454" width="2" height="1" fill="#000"/>
<rect x="64" y="331" width="1" height="123" fill="#c0c0ff"/>
<rect x="82" y="331" width="1" height="123" fill="#c0c0ff"/>
<rect x="97" y="331" width="1" height="123" fill="#c0c0ff"/>
<rect x="110" y="331" width="1" height="123" fill="#c0c0ff"/>
<rect x="121" y="331" width="1" height="123" fill="#c0c0ff"/>
<rect x="132" y="331" width="1" height="123" fill="#c0c0ff"/>
<rect x="199" y="331" width="1" height="123" fill="#c0c0ff"/>
<rect x="238" y="331" width="1" height="123" fill="#c0c0ff"/>
<rect x="266" y="331" width="1" height="123" fill="#c0c0ff"/>
<rect x="288" y="331" width="1" height="123" fill="#c0c0ff"/>
<rect x="306" y="331" width="1" height="123" fill="#c0c0ff"/>
<rect x="321" y="331" width="1" height="123" fill="#c0c0ff"/>
<rect x="333" y="331" width="1" height="123" fill="#c0c0ff"/>
<rect x="345" y="331" width="1" height="123" fill="#c0c0ff"/>
<rect x="355" y="331" width="1" height="123" fill="#c0c0ff"/>
<rect x="423" y="331" width="1" height="123" fill="#c0c0ff"/>
<rect x="462" y="331" width="1" height="123" fill="#c0c0ff"/>
<rect x="490" y="331" width="1" height="123" fill="#c0c0ff"/>
<rect x="512" y="331" width="1" height="123" fill="#c0c0ff"/>
<rect x="529" y="331" width="1" height="123" fill="#c0c0ff"/>
<rect x="544" y="331" width="1" height="123" fill="#c0c0ff"/>
<rect x="557" y="331" width="1" height="123" fill="#c0c0ff"/>
<rect x="569" y="331" width="1" height="123" fill="#c0c0ff"/>
<rect x="579" y="331" width="1" height="123" fill="#c0c0ff"/>
<path d="M64.8 394.5 L66.1 392.2 L67.2 381.0 L68.8 376.5 L72.0 377.3 L75.1 377.3 L77.2 376.2 L78.3 369.8 L79.9 357.1 L81.2 345.9 L82.6 340.8 L84.7 341.5 L86.8 344.3 L88.7 349.9 L91.1 355.5 L93.5 358.7 L95.4 362.7 L97.0 368.2 L98.2 372.2 L99.8 366.7 L101.8 360.3 L103.8 353.9 L105.7 350.4 L107.8 351.5 L109.9 353.6 L111.8 357.1 L113.4 361.9 L115.0 366.7 L116.6 369.0 L118.6 370.2 L120.9 368.2 L122.2 364.3 L123.7 357.9 L125.7 353.1 L127.7 349.1 L130.1 347.5 L131.2 350.7 L132.5 356.3 L134.6 360.3 L136.8 362.4 L139.7 361.1 L142.5 360.0 L145.3 356.3 L148.4 353.1 L151.3 351.5 L152.4 357.1 L153.7 365.9 L155.3 371.4 L157.2 366.7 L159.6 369.8 L162.8 375.4 L165.5 380.2 L167.6 376.2 L169.2 369.8 L171.2 368.2 L173.1 364.3 L174.4 360.3 L175.9 364.3 L177.5 373.0 L177.9 376.6 L179.9 383.9 L181.9 386.7 L183.8 385.9 L185.8 381.5 L187.4 376.2 L189.8 376.6 L191.7 379.5 L193.3 383.1 L195.7 380.5 L198.7 378.0 L201.2 377.6 L203.2 380.1 L206.6 380.5 L208.6 384.5 L210.9 388.4 L213.5 390.0 L216.5 390.4 L219.0 393.0 L221.8 398.7 L222.8 387.4 L223.6 375.6 L224.2 393.4 L224.8 404.8 L226.3 403.3 L227.9 398.3 L229.3 389.4 L231.3 383.9 L233.3 381.5 L235.2 386.5 L236.8 397.3 L237.6 392.4 L239.6 391.4 L241.6 394.4 L243.5 399.3 L245.7 404.3 L248.1 400.3 L250.7 395.4 L253.0 391.8 L255.0 390.4 L256.4 393.0 L257.6 391.0 L259.0 397.3 L260.0 407.2 L260.5 416.1 L260.9 389.4 L261.5 358.8 L262.3 373.6 L263.3 385.5 L264.9 395.4 L266.3 409.2 L266.9 427.0 L267.7 434.5 L268.5 423.0 L269.2 405.2 L270.2 388.4 L272.2 385.1 L272.8 399.3 L273.4 419.1 L274.0 430.9 L274.8 419.1 L275.8 405.2 L276.8 400.3 L278.1 398.3 L279.1 408.2 L280.3 397.3 L281.9 391.7 L282.8 400.5 L284.7 404.0 L287.1 409.2 L289.5 399.3 L291.4 401.2 L293.0 396.9 L294.7 407.6 L296.1 404.0 L297.8 394.5 L299.7 388.6 L301.3 393.4 L303.0 386.2 L303.7 385.1 L305.6 388.6 L307.3 394.5 L309.6 401.2 L312.0 406.4 L313.7 412.3 L315.1 408.8 L316.8 407.6 L317.9 410.0 L319.8 411.1 L322.2 417.1 L325.1 415.9 L328.6 414.7 L331.0 413.5 L332.6 407.6 L334.1 413.5 L335.7 419.4 L337.4 407.6 L338.8 415.9 L341.2 423.0 L343.6 426.6 L345.9 424.2 L348.3 423.0 L350.0 433.7 L351.9 443.9 L353.5 439.6 L355.2 427.7 L356.6 413.5 L358.3 420.6 L360.2 428.9 L361.8 431.3 L363.5 432.5 L365.4 428.9 L367.0 427.7 L368.9 437.2 L370.6 433.7 L372.0 438.4 L373.7 418.3 L375.3 430.1 L377.2 439.6 L379.1 434.9 L380.5 427.7 L382.0 442.0 L383.4 451.5 L384.8 439.6 L386.0 433.7 L387.4 442.0 L388.6 449.6 L390.3 439.6 L391.5 436.0 L392.0 442.2 L393.3 439.6 L394.9 437.2 L396.6 438.3 L397.9 443.5 L398.5 447.4 L399.4 333.2 L400.5 335.8 L401.8 453.9 L403.1 447.4 L404.4 453.3 L405.7 446.1 L406.6 441.5 L407.4 451.3 L408.7 333.9 L410.3 337.8 L411.6 334.5 L412.6 333.9 L413.3 340.4 L414.4 342.3 L416.1 450.6 L417.7 331.9 L419.7 448.7 L420.4 341.0 L421.3 342.3 L422.7 344.3 L424.0 337.1 L425.3 341.0 L426.2 333.9 L427.0 345.6 L428.3 333.2 L429.2 341.0 L430.1 346.9 L430.9 352.1 L431.8 347.6 L432.7 350.8 L433.5 360.6 L434.0 369.7 L435.4 452.6 L436.6 337.8 L437.9 340.4 L439.0 342.3 L440.0 348.9 L441.2 345.0 L442.6 346.9 L443.5 345.6 L444.6 354.1 L445.7 349.5 L446.8 352.1 L447.8 347.6 L448.7 340.4 L449.5 333.2 L450.3 342.3 L451.1 352.8 L452.0 347.6 L453.0 349.5 L454.3 352.1 L455.3 355.4 L456.2 358.0 L457.2 352.8 L458.5 356.0 L459.6 360.6 L460.5 357.3 L461.8 361.3 L463.1 354.7 L464.0 359.3 L464.8 365.8 L465.7 372.3 L466.3 380.8 L467.0 371.0 L467.9 367.8 L469.0 365.8 L469.9 371.0 L470.9 376.9 L472.2 373.0 L473.5 374.3 L474.4 380.8 L475.5 366.5 L476.5 375.6 L477.4 380.2 L478.7 384.1 L479.6 389.3 L480.7 397.8 L481.1 403.0 L482.0 408.0 L482.6 395.0 L483.0 391.5 L483.6 384.0 L484.1 392.0 L484.6 411.0 L485.4 431.7 L486.5 420.0 L487.6 440.2 L488.6 410.0 L489.3 384.0 L490.0 420.0 L490.6 451.5 L491.5 400.0 L492.4 335.2 L493.3 345.0 L494.0 365.0 L494.6 420.0 L495.6 453.5 L496.6 410.0 L497.4 353.4 L497.9 453.5 L499.0 420.0 L499.7 447.4 L500.4 343.0 L501.2 350.0 L501.9 340.0 L502.6 347.0 L503.4 336.5 L504.0 390.0 L504.6 453.5 L505.2 346.3 L505.9 346.9 L506.9 344.3 L508.1 346.3 L509.1 352.8 L510.0 343.7 L510.7 337.1 L511.5 342.3 L512.4 345.0 L513.3 363.2 L514.1 348.9 L515.0 341.0 L515.9 346.3 L516.6 338.4 L517.2 348.9 L517.9 357.3 L518.5 341.7 L519.6 343.0 L520.5 363.2 L521.3 352.8 L522.2 346.3 L523.2 349.5 L524.1 363.2 L524.8 351.5 L525.6 341.0 L526.3 352.1 L527.4 353.4 L528.2 347.6 L529.0 354.1 L529.7 360.0 L530.6 354.7 L532.0 352.1 L532.9 354.7 L533.6 358.7 L534.6 350.8 L535.6 354.7 L536.5 360.0 L537.4 354.1 L538.2 360.0 L539.1 351.5 L539.6 347.6 L540.4 352.8 L541.3 356.0 L542.1 350.8 L543.0 353.4 L544.1 356.7 L545.0 359.3 L545.9 357.3 L547.0 361.9 L547.9 358.7 L548.6 356.0 L549.6 348.9 L550.3 358.7 L551.5 365.2 L552.4 362.6 L553.5 356.0 L554.5 352.8 L555.4 350.8 L556.3 356.0 L557.4 361.3 L558.4 358.7 L559.3 353.4 L560.6 355.9 L562.2 358.5 L563.9 361.2 L565.3 359.2 L566.6 357.9 L567.5 361.9 L568.6 367.8 L569.7 363.2 L570.6 357.9 L571.2 354.6 L571.9 359.9 L573.2 362.5 L574.6 363.9 L575.9 365.8 L577.2 364.5 L578.6 363.2 L579.9 361.2 L581.2 363.9 L582.5 361.9 L583.5 365.8 L584.5 367.8 L585.6 364.5 L586.9 363.2 L588.2 365.8 L589.2 363.9 L590.5 366.5 L591.8 367.8 L592.8 365.2 L593.8 363.2 L594.6 359.9 L595.4 365.8 L596.5 367.2 L597.5 364.5 L598.9 366.5 L600.2 365.2 L601.5 363.2 L602.5 365.8 L603.8 367.8 L604.7 365.2 L605.8 366.5 L606.8 363.9 L607.8 358.5 L608.7 363.2 L609.8 357.9 L610.8 362.5 L611.8 359.2 L612.7 363.2 L613.7 360.5 L614.7 357.9 L615.7 361.2 L617.1 359.2 L618.4 357.2 L619.7 359.9 L621.0 361.2 L622.4 359.2 L623.3 357.2 L629.7 354.6 L636.3 351.9 L643.0 349.9 L644.0 349.0" stroke="#000" stroke-width="1.0" fill="none" shape-rendering="crispEdges" stroke-linejoin="round"/>
<rect x="600" y="333" width="43" height="24" fill="#000"/>
<rect x="604" y="336" width="10" height="2" fill="#fff"/>
<rect x="603" y="337" width="3" height="3" fill="#fff"/>
<rect x="603" y="339" width="11" height="2" fill="#fff"/>
<rect x="611" y="340" width="3" height="3" fill="#fff"/>
<rect x="603" y="342" width="10" height="2" fill="#fff"/>
<rect x="603" y="346" width="11" height="2" fill="#fff"/>
<rect x="607" y="349" width="3" height="5" fill="#fff"/>
<rect x="616" y="344" width="24" height="2" fill="#fff"/>
<path d="M617 344.5 L623 336.5 L628.5 344.5 L633.5 353.5 L639.5 344.5" stroke="#fff" stroke-width="1.25" fill="none" shape-rendering="auto" stroke-linejoin="miter"/>
<rect x="64" y="454" width="581" height="16" fill="url(#dith)"/>
<rect x="64" y="454" width="15" height="16" fill="#000"/>
<rect x="64" y="454" width="14" height="15" fill="#c8ccff"/>
<rect x="65" y="455" width="13" height="14" fill="#9080d0"/>
<rect x="65" y="455" width="12" height="13" fill="#c0a0ff"/>
<path d="M69.2 461.6 L72.4 458.6 V464.6 Z" stroke="none" stroke-width="1" fill="#000" shape-rendering="auto"/>
<rect x="631" y="454" width="14" height="16" fill="#000"/>
<rect x="631" y="454" width="13" height="15" fill="#c8ccff"/>
<rect x="632" y="455" width="12" height="14" fill="#9080d0"/>
<rect x="632" y="455" width="11" height="13" fill="#c0a0ff"/>
<path d="M640.3 461.6 L637.1 458.6 V464.6 Z" stroke="none" stroke-width="1" fill="#000" shape-rendering="auto"/>
<rect x="91" y="454" width="14" height="16" fill="#000"/>
<rect x="91" y="454" width="13" height="15" fill="#c8ccff"/>
<rect x="92" y="455" width="12" height="14" fill="#9080d0"/>
<rect x="92" y="455" width="11" height="13" fill="#c0a0ff"/>
<rect x="64" y="470" width="1" height="3" fill="#000"/>
<text x="64.5" y="485" font-size="12" text-anchor="middle" fill="#000" font-weight="normal">50</text>
<rect x="82" y="470" width="1" height="3" fill="#000"/>
<rect x="97" y="470" width="1" height="3" fill="#000"/>
<text x="97.5" y="485" font-size="12" text-anchor="middle" fill="#000" font-weight="normal">70</text>
<rect x="110" y="470" width="1" height="3" fill="#000"/>
<rect x="121" y="470" width="1" height="3" fill="#000"/>
<rect x="132" y="470" width="1" height="3" fill="#000"/>
<text x="132.5" y="485" font-size="12" text-anchor="middle" fill="#000" font-weight="normal">100</text>
<rect x="199" y="470" width="1" height="3" fill="#000"/>
<text x="199.5" y="485" font-size="12" text-anchor="middle" fill="#000" font-weight="normal">200</text>
<rect x="238" y="470" width="1" height="3" fill="#000"/>
<text x="238.5" y="485" font-size="12" text-anchor="middle" fill="#000" font-weight="normal">300</text>
<rect x="266" y="470" width="1" height="3" fill="#000"/>
<rect x="288" y="470" width="1" height="3" fill="#000"/>
<text x="288.5" y="485" font-size="12" text-anchor="middle" fill="#000" font-weight="normal">500</text>
<rect x="306" y="470" width="1" height="3" fill="#000"/>
<rect x="321" y="470" width="1" height="3" fill="#000"/>
<text x="321.5" y="485" font-size="12" text-anchor="middle" fill="#000" font-weight="normal">700</text>
<rect x="333" y="470" width="1" height="3" fill="#000"/>
<rect x="345" y="470" width="1" height="3" fill="#000"/>
<rect x="355" y="470" width="1" height="3" fill="#000"/>
<text x="355.5" y="485" font-size="12" text-anchor="middle" fill="#000" font-weight="normal">1.0k</text>
<rect x="423" y="470" width="1" height="3" fill="#000"/>
<text x="423.5" y="485" font-size="12" text-anchor="middle" fill="#000" font-weight="normal">2.0k</text>
<rect x="462" y="470" width="1" height="3" fill="#000"/>
<text x="462.5" y="485" font-size="12" text-anchor="middle" fill="#000" font-weight="normal">3.0k</text>
<rect x="490" y="470" width="1" height="3" fill="#000"/>
<rect x="512" y="470" width="1" height="3" fill="#000"/>
<text x="512.5" y="485" font-size="12" text-anchor="middle" fill="#000" font-weight="normal">5.0k</text>
<rect x="529" y="470" width="1" height="3" fill="#000"/>
<rect x="544" y="470" width="1" height="3" fill="#000"/>
<text x="544.5" y="485" font-size="12" text-anchor="middle" fill="#000" font-weight="normal">7.0k</text>
<rect x="557" y="470" width="1" height="3" fill="#000"/>
<rect x="569" y="470" width="1" height="3" fill="#000"/>
<rect x="579" y="470" width="1" height="3" fill="#000"/>
<text x="579.5" y="485" font-size="12" text-anchor="middle" fill="#000" font-weight="normal">10.0k</text>
<text x="376" y="497" font-size="12" text-anchor="middle" fill="#000" font-weight="normal">Frequency (Hz)</text>
<text x="57.7" y="336.0" font-size="12" text-anchor="end" fill="#000" font-weight="normal">180.0</text>
<text x="57.7" y="351.0" font-size="12" text-anchor="end" fill="#000" font-weight="normal">135.0</text>
<text x="57.7" y="366.0" font-size="12" text-anchor="end" fill="#000" font-weight="normal">90.0</text>
<text x="57.7" y="382.0" font-size="12" text-anchor="end" fill="#000" font-weight="normal">45.0</text>
<text x="57.7" y="397.0" font-size="12" text-anchor="end" fill="#000" font-weight="normal">0.0</text>
<text x="57.7" y="412.0" font-size="12" text-anchor="end" fill="#000" font-weight="normal">-45.0</text>
<text x="57.7" y="428.0" font-size="12" text-anchor="end" fill="#000" font-weight="normal">-90.0</text>
<text x="57.7" y="443.0" font-size="12" text-anchor="end" fill="#000" font-weight="normal">-135.0</text>
<text x="57.7" y="459.0" font-size="12" text-anchor="end" fill="#000" font-weight="normal">-180.0</text>
<text x="271.5" y="325" font-size="12" text-anchor="start" fill="#000" font-weight="normal" textLength="210" lengthAdjust="spacing">Complex Transfer Function (Left/Right)</text>
<text transform="translate(19.8,443) rotate(-90)" font-size="12" textLength="93" lengthAdjust="spacing">Phase (degrees)</text>
<rect x="0" y="504" width="753" height="2" fill="#fff"/>
</svg>
</body></html>
